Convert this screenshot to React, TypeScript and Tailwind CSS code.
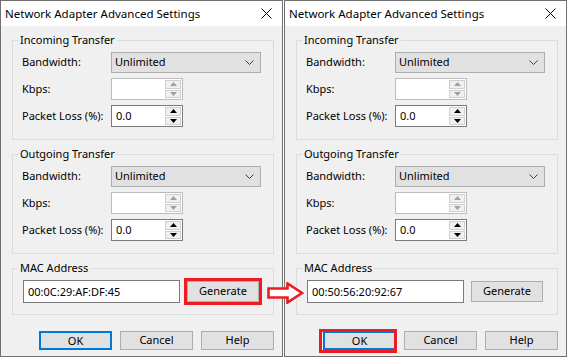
import React from 'react';

const font = { fontFamily: '"Noto Sans", "Liberation Sans", sans-serif' };

function SpinInput({ value, disabled }: { value: string; disabled?: boolean }) {
  const arrow = disabled ? '#a0a0a0' : '#000000';
  return (
    <div
      className={`flex h-[22px] w-[72px] bg-white border ${
        disabled ? 'border-[#bcbcbc]' : 'border-[#7a7a7a]'
      }`}
    >
      <div className="flex-1 pl-[4px] leading-[20px]">{value}</div>
      <div className="flex w-[17px] flex-col gap-[1px] py-[1px] pr-[1px]">
        <div className="flex flex-1 items-center justify-center border border-[#cfcfcf] bg-[#f0f0f0]">
          <svg width="7" height="4" viewBox="0 0 7 4">
            <polygon points="3.5,0 7,4 0,4" fill={arrow} />
          </svg>
        </div>
        <div className="flex flex-1 items-center justify-center border border-[#cfcfcf] bg-[#f0f0f0]">
          <svg width="7" height="4" viewBox="0 0 7 4">
            <polygon points="0,0 7,0 3.5,4" fill={arrow} />
          </svg>
        </div>
      </div>
    </div>
  );
}

function Group({
  title,
  children,
  className,
}: {
  title: string;
  children: React.ReactNode;
  className?: string;
}) {
  return (
    <fieldset className={`mx-[11px] w-[262px] border border-[#dcdcdc] ${className ?? ''}`}>
      <legend className="ml-[5px] px-[2px] leading-[16px]">{title}</legend>
      {children}
    </fieldset>
  );
}

function TransferGroup({ title, className }: { title: string; className?: string }) {
  return (
    <Group title={title} className={className}>
      <div className="flex flex-col gap-[5px] pl-[9px] pt-[4px] pb-[12px]">
        <div className="flex h-[21px] items-center">
          <span className="w-[89px]">Bandwidth:</span>
          <div className="flex h-[21px] w-[150px] items-center justify-between border border-[#adadad] bg-[#e1e1e1] pl-[3px] pr-[6px]">
            <span>Unlimited</span>
            <svg width="9" height="5" viewBox="0 0 9 5">
              <polyline points="0.5,0.5 4.5,4.5 8.5,0.5" fill="none" stroke="#404040" strokeWidth="1" />
            </svg>
          </div>
        </div>
        <div className="flex h-[22px] items-center">
          <span className="w-[89px]">Kbps:</span>
          <SpinInput value="" disabled />
        </div>
        <div className="flex h-[22px] items-center">
          <span className="w-[89px]">Packet Loss (%):</span>
          <SpinInput value="0.0" />
        </div>
      </div>
    </Group>
  );
}

function Dialog({
  mac,
  markGenerate,
  markOk,
}: {
  mac: string;
  markGenerate?: boolean;
  markOk?: boolean;
}) {
  return (
    <div className="flex h-[357px] w-[283px] flex-col border border-[#707070] bg-[#f0f0f0] text-[11px] text-black" style={font}>
      {/* Title bar */}
      <div className="flex h-[25px] shrink-0 items-center justify-between bg-white pl-[4px] pr-[10px]">
        <span className="text-[11.5px]">Network Adapter Advanced Settings</span>
        <svg width="11" height="11" viewBox="0 0 11 11">
          <path d="M0.5 0.5 L10.5 10.5 M10.5 0.5 L0.5 10.5" stroke="#000" strokeWidth="1" />
        </svg>
      </div>

      <div className="flex flex-col pt-[6px]">
        <TransferGroup title="Incoming Transfer" />
        <TransferGroup title="Outgoing Transfer" className="mt-[6px]" />

        <Group title="MAC Address" className="mt-[6px]">
          <div className="flex items-center gap-[7px] pl-[10px] pt-[4px] pb-[11px]">
            <div className="h-[23px] w-[157px] border border-[#7a7a7a] bg-white pl-[4px] leading-[21px]">
              {mac}
            </div>
            <div className="relative">
              <button className="h-[21px] w-[72px] border border-[#adadad] bg-[#e1e1e1]">Generate</button>
              {markGenerate && (
                <div className="pointer-events-none absolute -inset-[3px] border-[3px] border-[#ed1c24]" />
              )}
            </div>
          </div>
        </Group>

        {/* Buttons */}
        <div className="mt-[16px] flex gap-[8px] pl-[38px]">
          <div className="relative">
            <button className="h-[19px] w-[73px] border-2 border-[#0078d7] bg-[#e1e1e1]">OK</button>
            {markOk && (
              <div className="pointer-events-none absolute -top-[2px] -bottom-[3px] -left-[4px] -right-[1px] border-[3px] border-[#ed1c24]" />
            )}
          </div>
          <button className="h-[19px] w-[73px] border border-[#adadad] bg-[#e1e1e1]">Cancel</button>
          <button className="h-[19px] w-[73px] border border-[#adadad] bg-[#e1e1e1]">Help</button>
        </div>
      </div>
    </div>
  );
}

export default function App() {
  return (
    <div className="relative flex h-[358px] w-[568px] gap-[1px] bg-white">
      <Dialog mac="00:0C:29:AF:DF:45" markGenerate />
      <Dialog mac="00:50:56:20:92:67" markOk />

      {/* Arrow between the two dialogs */}
      <svg className="absolute left-[267px] top-[282px]" width="37" height="22" viewBox="0 0 37 22">
        <polygon
          points="1.5,6.5 20.5,6.5 20.5,1.5 35,11 20.5,20.5 20.5,15.5 1.5,15.5"
          fill="#ffffff"
          stroke="#ed1c24"
          strokeWidth="2.6"
        />
      </svg>
    </div>
  );
}
